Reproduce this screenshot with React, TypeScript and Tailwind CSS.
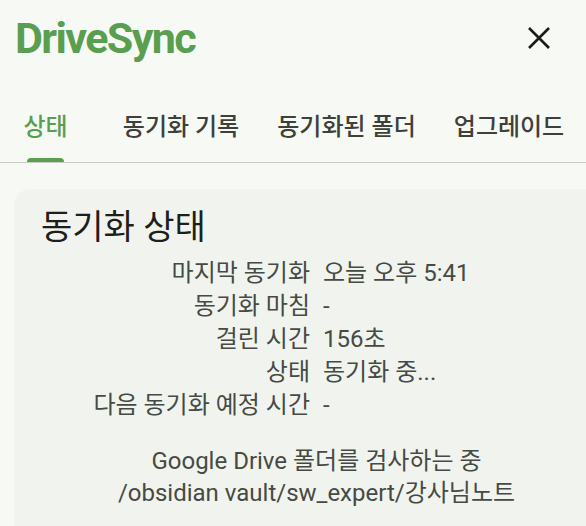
import React from 'react';

const rows: [string, string][] = [
  ['마지막 동기화', '오늘 오후 5:41'],
  ['동기화 마침', '-'],
  ['걸린 시간', '156초'],
  ['상태', '동기화 중...'],
  ['다음 동기화 예정 시간', '-'],
];

const tabs: [string, string][] = [
  ['상태', 'w-[91px]'],
  ['동기화 기록', 'w-[180px]'],
  ['동기화된 폴더', 'w-[151px]'],
  ['업그레이드', 'w-[174px]'],
];

export default function App() {
  return (
    <div
      className="w-[586px] h-[526px] overflow-hidden bg-[#f7f9f4] text-[#3f433d]"
      style={{ fontFamily: 'Roboto, "Noto Sans CJK KR", sans-serif' }}
    >
      {/* Top bar */}
      <div className="h-[76px] flex items-center justify-between pl-[15px] pr-[35px]">
        <h1 className="text-[43px] font-bold tracking-[-1.6px] text-[#5a9e50] leading-none">DriveSync</h1>
        <svg width="24" height="24" viewBox="0 0 24 24" className="text-[#1b1c1a]">
          <path d="M2 2 L22 22 M22 2 L2 22" stroke="currentColor" strokeWidth="2.6" />
        </svg>
      </div>

      {/* Tabs */}
      <div className="border-b border-[#c9cbc4] pt-[37px] flex">
        {tabs.map(([t, w], i) => (
          <div key={t} className={'shrink-0 flex flex-col items-center ' + w}>
            <span
              className={
                'text-[24px] leading-[28px] font-medium whitespace-nowrap ' +
                (i === 0 ? 'text-[#5a9e50]' : 'text-[#3d403b]')
              }
            >
              {t}
            </span>
            <div
              className={'mt-[17px] h-[4px] w-[37px] rounded-t-[4px] ' + (i === 0 ? 'bg-[#5a9e50]' : 'bg-transparent')}
            />
          </div>
        ))}
      </div>

      {/* Status card */}
      <div className="mt-[26px] ml-[14px] w-[605px] h-[360px] rounded-[16px] bg-[#f1f4ee] pt-[19px]">
        <h2 className="pl-[27px] text-[34px] leading-[38px] text-[#1d1f1c]">동기화 상태</h2>
        <div className="mt-[11px] grid grid-cols-[1fr_1fr] gap-x-[13px] text-[24px] leading-[33px] text-[#464a44]">
          {rows.map(([k, v]) => (
            <React.Fragment key={k}>
              <span className="text-right whitespace-nowrap">{k}</span>
              <span className="whitespace-nowrap">{v}</span>
            </React.Fragment>
          ))}
        </div>
        <div className="mt-[23px] text-center text-[24px] leading-[32px] text-[#464a44]">
          <p>Google Drive 폴더를 검사하는 중</p>
          <p>/obsidian vault/sw_expert/강사님노트</p>
        </div>
      </div>
    </div>
  );
}
